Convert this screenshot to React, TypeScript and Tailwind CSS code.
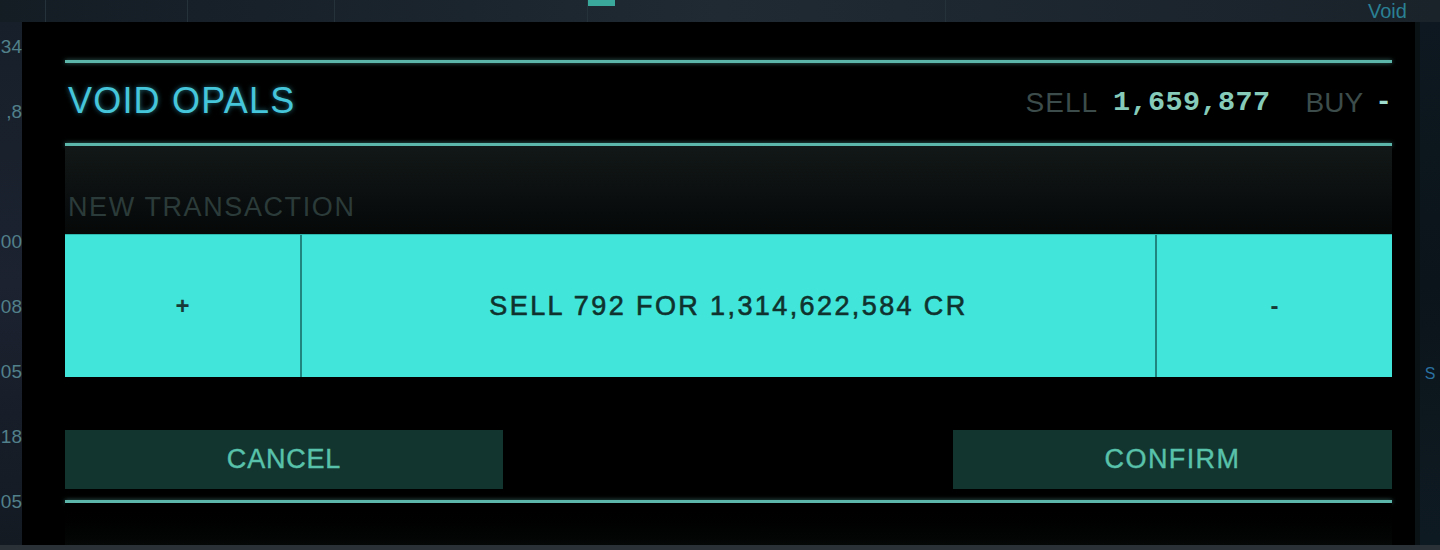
import React from "react";

const leftNums = ["34", ",8", "", "00", "08", "05", "18", "05"];

export default function App() {
  return (
    <div className="w-[1440px] h-[550px] overflow-hidden flex flex-col bg-[#161e25] font-['Liberation_Sans',Arial,sans-serif]">
      {/* top backdrop strip */}
      <div className="h-[22px] flex bg-gradient-to-r from-[#141c24] via-[#1f2a33] to-[#1a222a]">
        <div className="w-[46px] border-r border-[#25323a]" />
        <div className="w-[142px] border-r border-[#25323a]" />
        <div className="w-[147px] border-r border-[#25323a]" />
        <div className="w-[253px] border-r border-[#25323a]" />
        <div className="w-[27px] h-[6px] bg-[#3aa89a]" />
        <div className="w-[331px] border-r border-[#25323a]" />
        <div className="flex-1" />
        <div className="w-[72px] whitespace-nowrap text-[20px] leading-[22px] text-[#2a8093]">Void</div>
      </div>
      <div className="flex flex-1">
        {/* left backdrop strip */}
        <div className="w-[22px] bg-gradient-to-b from-[#17202a] via-[#1c2230] to-[#131a22]">
          <div className="-mt-[8px] flex flex-col">
            {leftNums.map((n, i) => (
              <div key={i} className="h-[65px] flex items-center justify-end whitespace-nowrap text-[19px] leading-none text-[#52808a]">
                {n}
              </div>
            ))}
          </div>
        </div>
        {/* modal */}
        <div className="w-[1393px] bg-black pl-[43px] pr-[23px] pt-[38px] flex flex-col">
          <div className="h-[3px] bg-[#5cb6aa] shadow-[0_0_4px_rgba(92,182,170,0.6)]" />
          <div className="h-[80px] flex items-center justify-between">
            <div className="pl-[3px] mb-[4px] text-[36px] leading-none tracking-[1.2px] text-[#46c6da] [text-shadow:0_0_5px_rgba(60,200,225,0.55)]">
              VOID OPALS
            </div>
            <div className="flex items-center text-[28px] leading-none">
              <span className="tracking-[1px] text-[#3c4c4a]">SELL</span>
              <span className="ml-[15px] font-['Liberation_Mono',monospace] font-bold text-[28.5px] tracking-[0.4px] text-[#86cbb9]">1,659,877</span>
              <span className="ml-[35px] text-[#3c4c4a]">BUY</span>
              <span className="ml-[12px] font-['Liberation_Mono',monospace] font-bold text-[#9fdccd]">-</span>
            </div>
          </div>
          <div className="h-[3px] bg-[#5cb6aa] shadow-[0_0_4px_rgba(92,182,170,0.6)]" />
          <div className="h-[88px] bg-gradient-to-b from-[#121817] via-[#0c1010] to-[#060808] flex items-end pb-[13px] pl-[3px]">
            <div className="text-[27px] leading-none tracking-[1.6px] text-[#2b3b39]">NEW TRANSACTION</div>
          </div>
          <div className="h-[143px] bg-[#41e5da] grid grid-cols-[235px_1fr_235px] border-t border-[#2fb8ae]">
            <div className="flex items-center justify-center text-[24px] leading-none font-bold text-[#173c38]">+</div>
            <div className="flex items-center justify-center border-x-2 border-[#1f857e] text-[27px] leading-none tracking-[2.4px] text-[#10322e] [-webkit-text-stroke:0.6px_#10322e]">
              SELL 792 FOR 1,314,622,584 CR
            </div>
            <div className="flex items-center justify-center text-[24px] leading-none font-bold text-[#173c38]">-</div>
          </div>
          <div className="h-[53px]" />
          <div className="h-[59px] flex justify-between">
            <div className="w-[438px] bg-[#133530] flex items-center justify-center text-[27px] leading-none tracking-[0.8px] text-[#58c2aa] [-webkit-text-stroke:0.4px_#58c2aa]">
              CANCEL
            </div>
            <div className="w-[439px] bg-[#133530] flex items-center justify-center text-[27px] leading-none tracking-[1.4px] text-[#58c2aa] [-webkit-text-stroke:0.4px_#58c2aa]">
              CONFIRM
            </div>
          </div>
          <div className="h-[11px]" />
          <div className="h-[3px] bg-[#5cb6aa] shadow-[0_0_4px_rgba(92,182,170,0.6)]" />
          <div className="flex-1 bg-gradient-to-b from-black to-[#040807]" />
        </div>
        {/* right backdrop strip */}
        <div className="flex-1 flex">
          <div className="w-[5px] bg-[#0a1216]" />
          <div className="flex-1 bg-gradient-to-b from-[#0d1820] via-[#0b141a] to-[#0e1a22] flex flex-col items-center pt-[344px] text-[16px] leading-none">
            <span className="text-[#2a70a0]">S</span>
          </div>
        </div>
      </div>
      <div className="h-[5px] bg-[#2a3238]" />
    </div>
  );
}
